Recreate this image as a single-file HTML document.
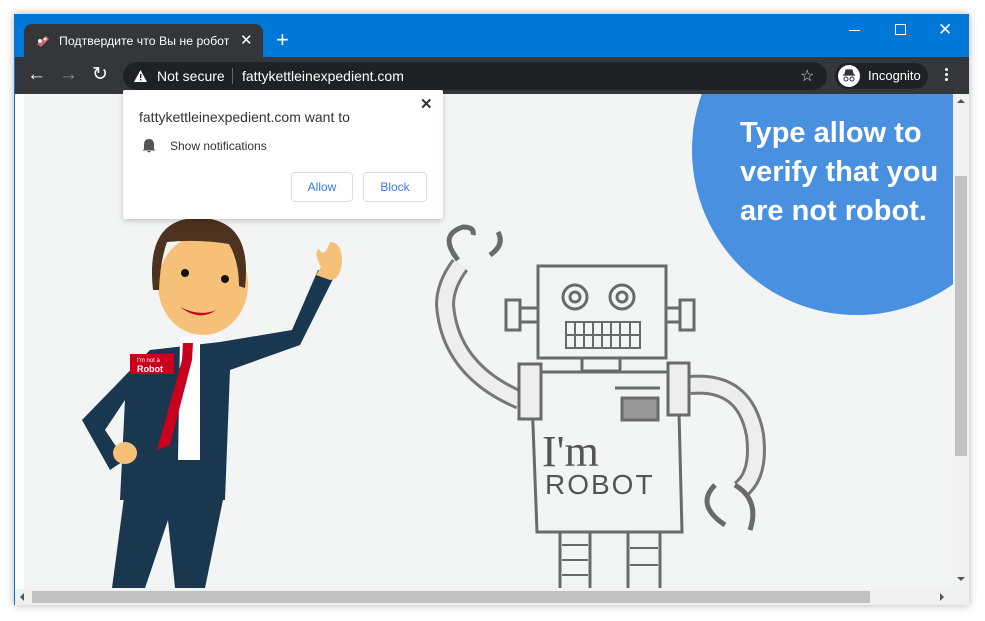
<!DOCTYPE html>
<html><head><meta charset="utf-8"><style>
body{margin:0;width:985px;height:621px;background:#fff;position:relative;overflow:hidden;font-family:"Liberation Sans",sans-serif}
.abs{position:absolute}
</style></head><body>
<div class="abs" style="left:14px;top:14px;width:955px;height:591px;background:#0078d7;box-shadow:0 0 8px rgba(0,0,0,.3)"></div>
<!-- tab -->
<div class="abs" style="left:24px;top:24px;width:239px;height:34px;background:#35363a;border-radius:8px 8px 0 0"></div>
<svg class="abs" style="left:34px;top:32px" width="18" height="18" viewBox="0 0 18 18"><path d="M3 12 L12 4 L15 7 L7 15Z" fill="#c9696e"/><circle cx="6" cy="9" r="2" fill="#eee"/><circle cx="11" cy="7" r="1.5" fill="#eee"/></svg>
<div class="abs" style="left:59px;top:34px;color:#fff;font-size:12.3px">Подтвердите что Вы не робот</div>
<div class="abs" style="left:240px;top:31px;color:#fff;font-size:15px">✕</div>
<div class="abs" style="left:276px;top:27px;color:#fff;font-size:22px">+</div>
<!-- window controls -->
<div class="abs" style="left:849px;top:30px;width:11px;height:1px;background:#fff"></div>
<div class="abs" style="left:895px;top:24px;width:9px;height:9px;border:1px solid #fff"></div>
<div class="abs" style="left:938px;top:20px;color:#fff;font-size:17px">✕</div>
<!-- toolbar -->
<div class="abs" style="left:15px;top:57px;width:954px;height:37px;background:#35363a"></div>
<div class="abs" style="left:27px;top:64px;color:#fff;font-size:19px">←</div>
<div class="abs" style="left:59px;top:64px;color:#888;font-size:19px">→</div>
<div class="abs" style="left:92px;top:63px;color:#fff;font-size:19px">↻</div>
<div class="abs" style="left:123px;top:62px;width:704px;height:28px;background:#202124;border-radius:14px"></div>
<svg class="abs" style="left:133px;top:69px" width="15" height="14"><path d="M7.5 1 L14 13 H1Z" fill="#fff"/><rect x="7" y="5" width="1.4" height="4" fill="#202124"/><rect x="7" y="10" width="1.4" height="1.4" fill="#202124"/></svg>
<div class="abs" style="left:157px;top:68px;color:#fff;font-size:14px">Not secure</div>
<div class="abs" style="left:232px;top:68px;width:1px;height:16px;background:#666"></div>
<div class="abs" style="left:242px;top:68px;color:#fff;font-size:14px">fattykettleinexpedient.com</div>
<div class="abs" style="left:800px;top:66px;color:#ddd;font-size:16px">☆</div>
<div class="abs" style="left:835px;top:63px;width:93px;height:26px;background:#202124;border-radius:13px"></div>
<div class="abs" style="left:838px;top:65px;width:22px;height:22px;background:#fff;border-radius:50%"></div>
<svg class="abs" style="left:841px;top:68px" width="16" height="16"><path d="M4 6 L5 2 H11 L12 6Z M2 7 H14" stroke="#333" fill="#333" stroke-width="1.2"/><circle cx="5" cy="11" r="2" fill="none" stroke="#333"/><circle cx="11" cy="11" r="2" fill="none" stroke="#333"/></svg>
<div class="abs" style="left:868px;top:68px;color:#fff;font-size:13px">Incognito</div>
<div class="abs" style="left:945px;top:68px;width:3px;height:3px;background:#fff;border-radius:50%;box-shadow:0 5px 0 #fff,0 10px 0 #fff"></div>
<!-- content -->
<div class="abs" style="left:15px;top:94px;width:938px;height:495px;background:#f3f5f4;overflow:hidden">
<div class="abs" style="left:0;top:0;width:9px;height:495px;background:#fff"></div>
<svg class="abs" style="left:-15px;top:-94px" width="985" height="621">
<circle cx="857" cy="150" r="165" fill="#4a90e0"/>
<text fill="#fff" font-family="Liberation Sans" font-weight="bold" font-size="29"><tspan x="740" y="142">Type allow to</tspan><tspan x="740" y="181">verify that you</tspan><tspan x="740" y="220">are not robot.</tspan></text>
<!-- man -->
<path d="M150 350 L220 342 L292 330 L318 270 L335 275 L300 345 L230 370 L225 500 L120 500 L125 400 L105 430 L125 460 L110 470 L82 420Z" fill="#19374f"/>
<path d="M125 490 L225 490 L205 588 L175 588 L168 520 L145 588 L112 588Z" fill="#19374f"/>
<path d="M330 242 q12 0 12 20 q-2 18 -12 18 l-14 -5 l5 -8 q-8 -15 -2 -18 q5 10 11 -7Z" fill="#f6c079"/>
<ellipse cx="125" cy="453" rx="12" ry="11" fill="#f6c079"/>
<path d="M180 338 L200 335 L200 460 L178 460Z" fill="#fff"/>
<path d="M183 343 L193 343 L192 360 L170 445 L157 450 L182 360Z" fill="#c8001e"/>
<rect x="130" y="354" width="44" height="20" fill="#c8001e"/>
<text x="137" y="362" fill="#fff" font-size="6">I'm not a</text><text x="137" y="372" fill="#fff" font-size="9" font-weight="bold">Robot</text>
<ellipse cx="203" cy="285" rx="45" ry="50" fill="#f6c079"/>
<path d="M153 290 q-8 -72 45 -72 q55 0 47 70 l-6 -2 q0 -25 -10 -42 q-30 -5 -62 -2 q-7 20 -8 48Z" fill="#4e3220"/>
<circle cx="185" cy="273" r="4" fill="#111"/><circle cx="225" cy="279" r="4" fill="#111"/>
<path d="M180 307 q20 10 36 3 q-16 12 -36 -3Z" fill="#c8001e"/>
<!-- robot -->
<g fill="none" stroke="#6a6a6a" stroke-width="3">
<path d="M520 400 q-70 -30 -75 -95 q0 -20 15 -40" stroke-width="20" stroke="#777"/>
<path d="M520 400 q-70 -30 -75 -95 q0 -20 15 -40" stroke-width="14" stroke="#eee"/>
<path d="M458 260 q-20 -25 5 -33 q12 0 10 8" stroke-width="5"/>
<path d="M490 255 q15 -10 8 -23" stroke-width="5"/>
<path d="M690 385 q55 -5 65 50 q5 40 -15 55" stroke-width="20" stroke="#777"/>
<path d="M690 385 q55 -5 65 50 q5 40 -15 55" stroke-width="14" stroke="#eee"/>
<path d="M715 485 q-20 20 10 40 M735 485 q25 15 15 45" stroke-width="5"/>
<rect x="538" y="266" width="128" height="92" fill="#f3f5f4"/>
<rect x="506" y="300" width="14" height="30"/><rect x="520" y="308" width="18" height="14"/>
<rect x="680" y="300" width="14" height="30"/><rect x="666" y="308" width="14" height="14"/>
<circle cx="575" cy="297" r="12"/><circle cx="575" cy="297" r="5"/>
<circle cx="622" cy="297" r="12"/><circle cx="622" cy="297" r="5"/>
<rect x="566" y="322" width="74" height="26" stroke-width="2"/>
<path d="M566 335 H640 M575 322 V348 M584 322 V348 M593 322 V348 M602 322 V348 M611 322 V348 M620 322 V348 M630 322 V348" stroke-width="2"/>
<rect x="582" y="358" width="38" height="13"/>
<path d="M531 372 H678 L682 532 H537Z" fill="#f3f5f4"/>
<rect x="519" y="364" width="22" height="55" fill="#eee"/><rect x="668" y="363" width="21" height="52" fill="#eee"/>
<rect x="622" y="398" width="36" height="22" fill="#999"/>
<path d="M615 388 H660"/>
<path d="M560 532 V588 M590 532 V588 M628 532 V588 M660 532 V588"/>
<path d="M562 545 H588 M562 560 H588 M562 575 H588 M630 548 H658 M630 565 H658" stroke-width="2"/>
</g>
<text x="542" y="466" font-family="Liberation Serif" font-size="44" fill="#555">I'm</text>
<text x="545" y="494" font-family="Liberation Sans" font-size="28" fill="#555" letter-spacing="2">ROBOT</text>
</svg>
</div>
<!-- popup -->
<div class="abs" style="left:123px;top:90px;width:320px;height:129px;background:#fff;box-shadow:0 2px 6px rgba(0,0,0,.2);border-radius:2px"></div>
<div class="abs" style="left:420px;top:95px;color:#333;font-size:15px;font-weight:bold">✕</div>
<div class="abs" style="left:139px;top:109px;color:#333;font-size:14px">fattykettleinexpedient.com want to</div>
<svg class="abs" style="left:142px;top:138px" width="14" height="15"><path d="M7 1 q-5 0 -5 6 v4 l-1.5 1.5 h13 l-1.5 -1.5 v-4 q0 -6 -5 -6Z M5 13 h4 q-2 3 -4 0Z" fill="#555"/></svg>
<div class="abs" style="left:170px;top:139px;color:#333;font-size:12px">Show notifications</div>
<div class="abs" style="left:291px;top:172px;width:62px;height:30px;border:1px solid #ddd;border-radius:4px;box-sizing:border-box;color:#3b78e7;font-size:12px;text-align:center;line-height:28px">Allow</div>
<div class="abs" style="left:363px;top:172px;width:64px;height:30px;border:1px solid #ddd;border-radius:4px;box-sizing:border-box;color:#3b78e7;font-size:12px;text-align:center;line-height:28px">Block</div>
<!-- scrollbars -->
<div class="abs" style="left:953px;top:94px;width:16px;height:495px;background:#f1f1f1"></div>
<div class="abs" style="left:955px;top:176px;width:12px;height:280px;background:#c1c1c1"></div>
<div class="abs" style="left:957px;top:99px;border:4px solid transparent;border-bottom:4px solid #555;border-top:0"></div>
<div class="abs" style="left:957px;top:577px;border:4px solid transparent;border-top:4px solid #555;border-bottom:0"></div>
<div class="abs" style="left:15px;top:589px;width:954px;height:16px;background:#f1f1f1"></div>
<div class="abs" style="left:32px;top:591px;width:838px;height:12px;background:#c1c1c1"></div>
<div class="abs" style="left:20px;top:593px;border:4px solid transparent;border-right:4px solid #555;border-left:0"></div>
<div class="abs" style="left:940px;top:593px;border:4px solid transparent;border-left:4px solid #555;border-right:0"></div>
</body></html>
